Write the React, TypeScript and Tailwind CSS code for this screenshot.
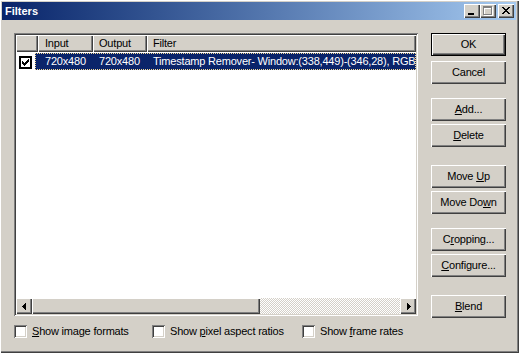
import React from "react";

const raised =
  "bg-[#d4d0c8] shadow-[inset_1px_1px_#ffffff,inset_-1px_-1px_#404040,inset_-2px_-2px_#808080]";
const sunken =
  "shadow-[inset_1px_1px_#808080,inset_-1px_-1px_#ffffff,inset_2px_2px_#404040,inset_-2px_-2px_#d4d0c8]";

function Pixels({ rows, color, dx = 0, dy = 0 }: { rows: string[]; color: string; dx?: number; dy?: number }) {
  const rects: React.ReactNode[] = [];
  rows.forEach((r, y) =>
    r.split("").forEach((c, x) => {
      if (c === "#") rects.push(<rect key={`${x}-${y}`} x={x + dx} y={y + dy} width={1} height={1} fill={color} />);
    })
  );
  return <>{rects}</>;
}

const CHECK = ["......#", ".....##", "#...###", "##.###.", "#####..", ".###...", "..#...."];
const CLOSE = ["##....##", ".##..##.", "..####..", "...##...", "..####..", ".##..##.", "##....##"];

function CaptionButton({ kind }: { kind: "min" | "max" | "close" }) {
  return (
    <div className={`h-[14px] w-[16px] ${raised}`}>
      <svg width="16" height="14" viewBox="0 0 16 14" shapeRendering="crispEdges">
        {kind === "min" && <rect x={4} y={9} width={6} height={2} fill="#000" />}
        {kind === "max" && (
          <>
            <g fill="#ffffff">
              <rect x={4} y={3} width={9} height={2} />
              <rect x={4} y={3} width={1} height={9} />
              <rect x={12} y={3} width={1} height={9} />
              <rect x={4} y={11} width={9} height={1} />
            </g>
            <g fill="#808080">
              <rect x={3} y={2} width={9} height={2} />
              <rect x={3} y={2} width={1} height={9} />
              <rect x={11} y={2} width={1} height={9} />
              <rect x={3} y={10} width={9} height={1} />
            </g>
          </>
        )}
        {kind === "close" && <Pixels rows={CLOSE} color="#000" dx={4} dy={3} />}
      </svg>
    </div>
  );
}

function Btn({
  children,
  className = "",
  isDefault = false,
}: {
  children: React.ReactNode;
  className?: string;
  isDefault?: boolean;
}) {
  if (isDefault) {
    return (
      <div className={`h-[23px] w-[75px] border border-black ${className}`}>
        <div className={`flex h-full w-full items-center justify-center ${raised}`}>{children}</div>
      </div>
    );
  }
  return <div className={`flex h-[23px] w-[75px] items-center justify-center ${raised} ${className}`}>{children}</div>;
}

function CheckBox({ label }: { label: React.ReactNode }) {
  return (
    <div className="flex items-center">
      <div className={`h-[13px] w-[13px] bg-white ${sunken}`} />
      <span className="ml-[5px] leading-[13px]">{label}</span>
    </div>
  );
}

function HeaderCell({ children, className = "" }: { children?: React.ReactNode; className?: string }) {
  return (
    <div className={`flex h-full items-center overflow-hidden whitespace-nowrap ${raised} ${className}`}>{children}</div>
  );
}

export default function App() {
  return (
    <div className="relative h-[353px] w-[519px] overflow-hidden bg-[#d4d0c8] pl-[2px] pr-[3px] pt-[2px] text-[11px] leading-[13px] tracking-[-0.2px] text-black [font-family:'Liberation_Sans',Arial,sans-serif] shadow-[inset_1px_1px_#ffffff,inset_-1px_-1px_#404040,inset_-2px_-2px_#808080]">
      {/* Title bar */}
      <div className="flex h-[18px] items-center bg-linear-to-r from-[#0a246a] to-[#a6caf0] pl-[3px] pr-[2px]">
        <span className="flex-1 text-[11px] font-bold tracking-normal text-white">Filters</span>
        <CaptionButton kind="min" />
        <CaptionButton kind="max" />
        <div className="w-[2px]" />
        <CaptionButton kind="close" />
      </div>

      {/* Body */}
      <div className="flex pl-[12px] pt-[13px]">
        {/* Left */}
        <div className="flex flex-col">
          <div className={`flex h-[283px] w-[404px] flex-col bg-white p-[2px] ${sunken}`}>
            {/* header */}
            <div className="flex h-[17px] shrink-0">
              <HeaderCell className="w-[22px]" />
              <HeaderCell className="w-[55px] pl-[7px]">Input</HeaderCell>
              <HeaderCell className="w-[54px] pl-[6px]">Output</HeaderCell>
              <HeaderCell className="flex-1 pl-[6px]">Filter</HeaderCell>
            </div>
            {/* row */}
            <div className="mt-[1px] flex h-[17px] shrink-0">
              <div className="w-[19px] pl-[3px] pt-[3px]">
                <div className="h-[13px] w-[13px] border-2 border-black bg-white">
                  <svg width="9" height="9" viewBox="0 0 9 9" shapeRendering="crispEdges" className="block">
                    <Pixels rows={CHECK} color="#000" dx={1} dy={1} />
                  </svg>
                </div>
              </div>
              <div className="flex flex-1 items-center overflow-hidden whitespace-nowrap border border-dotted border-[#f5db95] bg-[#0a246a] text-white">
                <span className="w-[63px] shrink-0 pl-[9px]">720x480</span>
                <span className="w-[54px] shrink-0">720x480</span>
                <span className="shrink-0">Timestamp Remover- Window:(338,449)-(346,28), RGB32</span>
              </div>
            </div>
            <div className="flex-1" />
            {/* horizontal scrollbar */}
            <div className="flex h-[16px] shrink-0">
              <div className={`flex h-[16px] w-[16px] items-center justify-center ${raised}`}>
                <svg width="4" height="7" viewBox="0 0 4 7" shapeRendering="crispEdges" className="mr-[1px]">
                  <polygon points="4,0 4,7 0,3.5" fill="#000" />
                </svg>
              </div>
              <div className={`h-[16px] w-[228px] ${raised}`} />
              <div className="h-[16px] flex-1 bg-[repeating-conic-gradient(#d4d0c8_0_25%,#ffffff_0_50%)] bg-[length:2px_2px]" />
              <div className={`flex h-[16px] w-[16px] items-center justify-center ${raised}`}>
                <svg width="4" height="7" viewBox="0 0 4 7" shapeRendering="crispEdges" className="ml-[1px]">
                  <polygon points="0,0 0,7 4,3.5" fill="#000" />
                </svg>
              </div>
            </div>
          </div>

          {/* bottom checkboxes */}
          <div className="mt-[9px] flex">
            <div className="w-[138px]">
              <CheckBox label={<><u>S</u>how image formats</>} />
            </div>
            <div className="w-[150px]">
              <CheckBox label={<>Show <u>p</u>ixel aspect ratios</>} />
            </div>
            <div>
              <CheckBox label={<>Show <u>f</u>rame rates</>} />
            </div>
          </div>
        </div>

        {/* Right buttons */}
        <div className="ml-[13px] flex w-[75px] flex-col">
          <Btn isDefault>OK</Btn>
          <Btn className="mt-[5px]">Cancel</Btn>
          <Btn className="mt-[14px]">
            <span><u>A</u>dd...</span>
          </Btn>
          <Btn className="mt-[3px]">
            <span><u>D</u>elete</span>
          </Btn>
          <Btn className="mt-[18px]">
            <span>Move <u>U</u>p</span>
          </Btn>
          <Btn className="mt-[3px]">
            <span>Move Do<u>w</u>n</span>
          </Btn>
          <Btn className="mt-[14px]">
            <span>C<u>r</u>opping...</span>
          </Btn>
          <Btn className="mt-[3px]">
            <span><u>C</u>onfigure...</span>
          </Btn>
          <Btn className="mt-[18px]">
            <span><u>B</u>lend</span>
          </Btn>
        </div>
      </div>
    </div>
  );
}
